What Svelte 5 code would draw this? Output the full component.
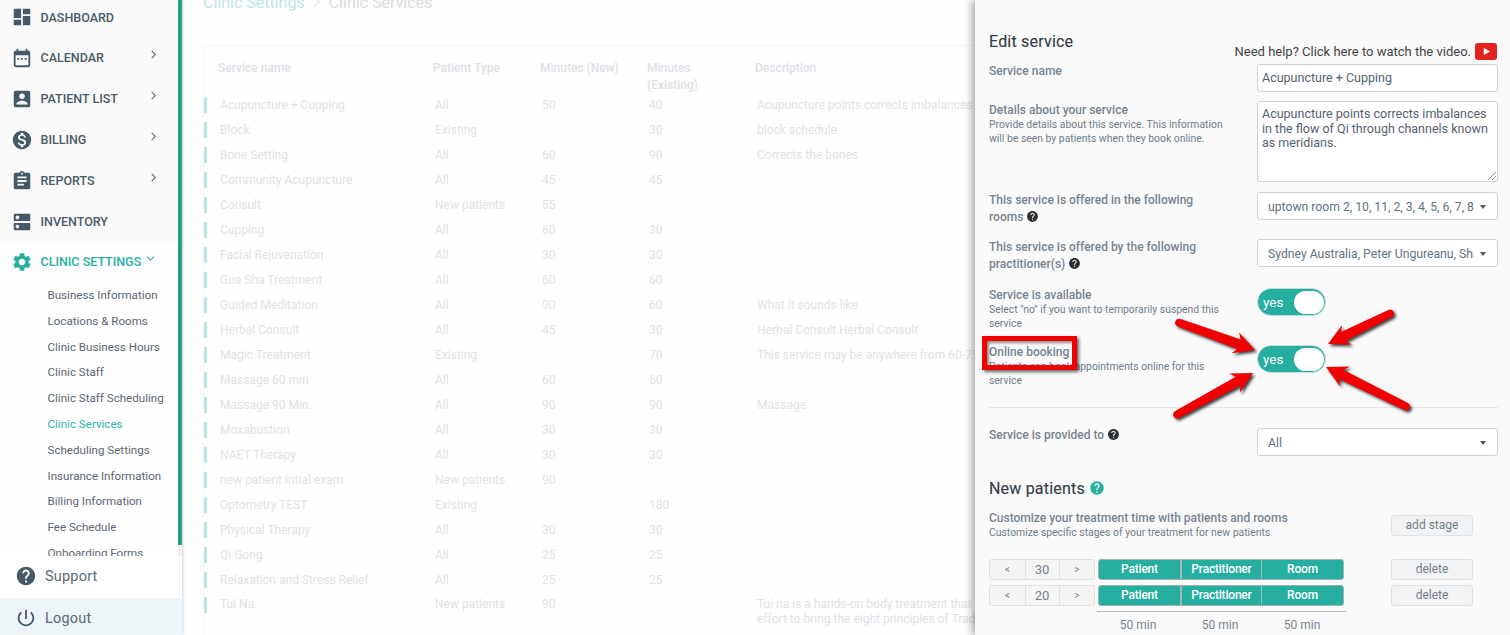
<script>
	const icons = {
		dashboard: 'M3 13h8V3H3v10zm0 8h8v-6H3v6zm10 0h8V11h-8v10zm0-18v6h8V3h-8z',
		calendar:
			'M19 4h-1V2h-2v2H8V2H6v2H5a2 2 0 0 0-2 2v14a2 2 0 0 0 2 2h14a2 2 0 0 0 2-2V6a2 2 0 0 0-2-2zm0 16H5V9h14v11zM9 12H7v2h2v-2zm4 0h-2v2h2v-2zm4 0h-2v2h2v-2z',
		patient:
			'M3 5v14a2 2 0 0 0 2 2h14a2 2 0 0 0 2-2V5a2 2 0 0 0-2-2H5a2 2 0 0 0-2 2zm12 4a3 3 0 1 1-6 0 3 3 0 0 1 6 0zM6 17c0-2 4-3.1 6-3.1s6 1.1 6 3.1v1H6v-1z',
		billing:
			'M12 2C6.48 2 2 6.48 2 12s4.48 10 10 10 10-4.48 10-10S17.52 2 12 2zm1.41 16.09V20h-2.67v-1.93c-1.71-.36-3.16-1.46-3.27-3.4h1.96c.1 1.05.82 1.87 2.65 1.87 1.96 0 2.4-.98 2.4-1.59 0-.83-.44-1.61-2.67-2.14-2.48-.6-4.18-1.62-4.18-3.67 0-1.72 1.39-2.84 3.11-3.21V4h2.67v1.95c1.86.45 2.79 1.86 2.85 3.39H14.3c-.05-1.11-.64-1.87-2.22-1.87-1.5 0-2.4.68-2.4 1.64 0 .84.65 1.39 2.67 1.91s4.18 1.39 4.18 3.91c-.01 1.83-1.38 2.83-3.12 3.16z',
		reports:
			'M19 3h-4.18C14.4 1.84 13.3 1 12 1c-1.3 0-2.4.84-2.82 2H5c-1.1 0-2 .9-2 2v14c0 1.1.9 2 2 2h14c1.1 0 2-.9 2-2V5c0-1.1-.9-2-2-2zm-7 0c.55 0 1 .45 1 1s-.45 1-1 1-1-.45-1-1 .45-1 1-1zm2 14H7v-2h7v2zm3-4H7v-2h10v2zm0-4H7V7h10v2z',
		inventory:
			'M20 13H4c-.55 0-1 .45-1 1v6c0 .55.45 1 1 1h16c.55 0 1-.45 1-1v-6c0-.55-.45-1-1-1zM7 19c-1.1 0-2-.9-2-2s.9-2 2-2 2 .9 2 2-.9 2-2 2zM20 3H4c-.55 0-1 .45-1 1v6c0 .55.45 1 1 1h16c.55 0 1-.45 1-1V4c0-.55-.45-1-1-1zM7 9c-1.1 0-2-.9-2-2s.9-2 2-2 2 .9 2 2-.9 2-2 2z',
		settings:
			'M19.14 12.94c.04-.3.06-.61.06-.94 0-.32-.02-.64-.07-.94l2.03-1.58c.18-.14.23-.41.12-.61l-1.92-3.32c-.12-.22-.37-.29-.59-.22l-2.39.96c-.5-.38-1.03-.7-1.62-.94l-.36-2.54c-.04-.24-.24-.41-.48-.41h-3.84c-.24 0-.43.17-.47.41l-.36 2.54c-.59.24-1.13.57-1.62.94l-2.39-.96c-.22-.08-.47 0-.59.22L2.74 8.87c-.12.21-.08.47.12.61l2.03 1.58c-.05.3-.09.63-.09.94s.02.64.07.94l-2.03 1.58c-.18.14-.23.41-.12.61l1.92 3.32c.12.22.37.29.59.22l2.39-.96c.5.38 1.03.7 1.62.94l.36 2.54c.05.24.24.41.48.41h3.84c.24 0 .44-.17.47-.41l.36-2.54c.59-.24 1.13-.56 1.62-.94l2.39.96c.22.08.47 0 .59-.22l1.92-3.32c.12-.22.07-.47-.12-.61l-2.01-1.58zM12 15.6c-1.98 0-3.6-1.62-3.6-3.6s1.62-3.6 3.6-3.6 3.6 1.62 3.6 3.6-1.62 3.6-3.6 3.6z',
		help: 'M12 2C6.48 2 2 6.48 2 12s4.48 10 10 10 10-4.48 10-10S17.52 2 12 2zm1 17h-2v-2h2v2zm2.07-7.75l-.9.92C13.45 12.9 13 13.5 13 15h-2v-.5c0-1.1.45-2.1 1.17-2.83l1.24-1.26c.37-.36.59-.86.59-1.41 0-1.1-.9-2-2-2s-2 .9-2 2H8c0-2.21 1.79-4 4-4s4 1.79 4 4c0 .88-.36 1.68-.93 2.25z',
		power:
			'M13 3h-2v10h2V3zm4.83 2.17l-1.42 1.42C17.99 7.86 19 9.81 19 12c0 3.87-3.13 7-7 7s-7-3.13-7-7c0-2.19 1.01-4.14 2.58-5.42L6.17 5.17C4.23 6.82 3 9.26 3 12c0 4.97 4.03 9 9 9s9-4.03 9-9c0-2.74-1.23-5.18-3.17-6.83z'
	};

	const navItems = [
		{ label: 'Dashboard', icon: 'dashboard' },
		{ label: 'Calendar', icon: 'calendar', more: true },
		{ label: 'Patient list', icon: 'patient', more: true },
		{ label: 'Billing', icon: 'billing', more: true },
		{ label: 'Reports', icon: 'reports', more: true },
		{ label: 'Inventory', icon: 'inventory' }
	];

	const subItems = [
		'Business Information',
		'Locations & Rooms',
		'Clinic Business Hours',
		'Clinic Staff',
		'Clinic Staff Scheduling',
		'Clinic Services',
		'Scheduling Settings',
		'Insurance Information',
		'Billing Information',
		'Fee Schedule',
		'Onboarding Forms'
	];

	const services = [
		['Acupuncture + Cupping', 'All', '50', '40', 'Acupuncture points corrects imbalances in the flow of Qi through channels known as meridians.'],
		['Block', 'Existing', '', '30', 'block schedule'],
		['Bone Setting', 'All', '60', '90', 'Corrects the bones'],
		['Community Acupuncture', 'All', '45', '45', ''],
		['Consult', 'New patients', '55', '', ''],
		['Cupping', 'All', '60', '30', ''],
		['Facial Rejuvenation', 'All', '30', '30', ''],
		['Gua Sha Treatment', 'All', '60', '60', ''],
		['Guided Meditation', 'All', '90', '60', 'What it sounds like'],
		['Herbal Consult', 'All', '45', '30', 'Herbal Consult Herbal Consult'],
		['Magic Treatment', 'Existing', '', '70', 'This service may be anywhere from 60-75 minutes long depending on the patient.'],
		['Massage 60 min', 'All', '60', '60', ''],
		['Massage 90 Min.', 'All', '90', '90', 'Massage'],
		['Moxabustion', 'All', '30', '30', ''],
		['NAET Therapy', 'All', '30', '30', ''],
		['new patient intial exam', 'New patients', '90', '', ''],
		['Optometry TEST', 'Existing', '', '180', ''],
		['Physical Therapy', 'All', '30', '30', ''],
		['Qi Gong', 'All', '25', '25', ''],
		['Relaxation and Stress Relief', 'All', '25', '25', '']
	];

	const stages = ['30', '20'];

	// tail and tip of each red annotation arrow, in page pixels
	const arrows = [
		[1180, 323, 1255, 350],
		[1389, 314, 1328, 344],
		[1178, 414, 1253, 373],
		[1405, 406, 1326, 367]
	];

	function arrowPath([x1, y1, x2, y2]) {
		const a = Math.atan2(y2 - y1, x2 - x1);
		const ux = Math.cos(a);
		const uy = Math.sin(a);
		const at = (along, side) =>
			`${(x2 - ux * along - uy * side).toFixed(1)} ${(y2 - uy * along + ux * side).toFixed(1)}`;
		const len = Math.hypot(x2 - x1, y2 - y1);
		return [
			`M${x2} ${y2}`,
			`L${at(21, 11)}`,
			`L${at(17, 5)}`,
			`L${at(len, 4)}`,
			`Q${at(len + 5, 4)} ${at(len + 5, 0)}`,
			`Q${at(len + 5, -4)} ${at(len, -4)}`,
			`L${at(17, -5)}`,
			`L${at(21, -11)}Z`
		].join('');
	}
</script>

{#snippet icon(name, cls = '')}
	<svg class="icon {cls}" viewBox="0 0 24 24" aria-hidden="true"><path d={icons[name]} /></svg>
{/snippet}

{#snippet hint()}
	<svg class="hint" viewBox="0 0 24 24" aria-hidden="true"><path d={icons.help} /></svg>
{/snippet}

<div class="page">
	<aside class="sidebar">
		<div class="rail">
			<nav class="nav">
				{#each navItems as item}
					<div class="nav-item">
						{@render icon(item.icon)}
						<span class="nav-label">{item.label}</span>
						{#if item.more}
							<svg class="chev" viewBox="0 0 10 10" aria-hidden="true"><path d="M3 1l4 4-4 4" /></svg>
						{/if}
					</div>
				{/each}
				<div class="nav-open">
					<div class="nav-item active">
						{@render icon('settings')}
						<span class="nav-label">Clinic settings</span>
						<svg class="chev down" viewBox="0 0 10 10" aria-hidden="true"><path d="M1 3l4 4 4-4" /></svg>
					</div>
					<ul class="sub">
						{#each subItems as sub}
							<li class:current={sub === 'Clinic Services'}>{sub}</li>
						{/each}
					</ul>
				</div>
			</nav>
			<div class="scroll-track"><div class="scroll-thumb"></div></div>
		</div>
		<div class="foot">
			{@render icon('help')}
			<span>Support</span>
		</div>
		<div class="foot logout">
			{@render icon('power')}
			<span>Logout</span>
		</div>
	</aside>

	<main class="main">
		<div class="crumbs">
			<span class="crumb-link">Clinic Settings</span>
			<svg class="crumb-sep" viewBox="0 0 10 14" aria-hidden="true"><path d="M2 2l5 5-5 5" /></svg>
			<span>Clinic Services</span>
		</div>
		<section class="table">
			<div class="row head">
				<span>Service name</span>
				<span>Patient Type</span>
				<span>Minutes (New)</span>
				<span>Minutes<br />(Existing)</span>
				<span>Description</span>
			</div>
			{#each services as s}
				<div class="row">
					<span class="name">{s[0]}</span>
					<span>{s[1]}</span>
					<span>{s[2]}</span>
					<span>{s[3]}</span>
					<span class="desc">{s[4]}</span>
				</div>
			{/each}
			<div class="row tall">
				<span class="name">Tui Na</span>
				<span>New patients</span>
				<span>90</span>
				<span></span>
				<span class="desc">Tui na is a hands-on body treatment that uses acupressure<br />effort to bring the eight principles of Traditional Chinese Medicine</span>
			</div>
		</section>
	</main>

	<section class="drawer">
		<header class="drawer-head">
			<h2>Edit service</h2>
			<div class="help-link">
				<span>Need help? Click here to watch the video.</span>
				<span class="yt"><svg viewBox="0 0 10 10" aria-hidden="true"><path d="M2 1l7 4-7 4z" /></svg></span>
			</div>
		</header>

		<div class="field f-name">
			<div class="lab">Service name</div>
			<div class="control">Acupuncture + Cupping</div>
		</div>

		<div class="field f-details">
			<div class="details-copy">
				<div class="lab">Details about your service</div>
				<p>Provide details about this service. This information will be seen by patients when they book online.</p>
			</div>
			<div class="control area">
				Acupuncture points corrects imbalances in the flow of Qi through channels known as meridians.
				<svg class="grip" viewBox="0 0 8 8" aria-hidden="true"><path d="M0 8l8-8M4 8l4-4" /></svg>
			</div>
		</div>

		<div class="field f-rooms">
			<div class="lab tall-lab">This service is offered in the following rooms {@render hint()}</div>
			<div class="control select"><span class="clip">uptown room 2, 10, 11, 2, 3, 4, 5, 6, 7, 8, 9</span><i class="caret"></i></div>
		</div>

		<div class="field f-staff">
			<div class="lab tall-lab">This service is offered by the following practitioner(s) {@render hint()}</div>
			<div class="control select"><span class="clip">Sydney Australia, Peter Ungureanu, Shannon</span><i class="caret"></i></div>
		</div>

		<div class="field f-avail">
			<div>
				<div class="lab">Service is available</div>
				<p>Select "no" if you want to temporarily suspend this service</p>
			</div>
			<div class="toggle"><span>yes</span><i></i></div>
		</div>

		<div class="field f-online">
			<div>
				<div class="lab">Online booking</div>
				<p>Patients can book appointments online for this service</p>
			</div>
			<div class="toggle"><span>yes</span><i></i></div>
		</div>

		<hr />

		<div class="field f-to">
			<div class="lab">Service is provided to {@render hint()}</div>
			<div class="control select"><span class="clip">All</span><i class="caret"></i></div>
		</div>

		<h2 class="h-new">New patients <svg class="hint teal" viewBox="0 0 24 24" aria-hidden="true"><path d={icons.help} /></svg></h2>

		<div class="stage-intro">
			<div>
				<div class="lab">Customize your treatment time with patients and rooms</div>
				<p class="wide">Customize specific stages of your treatment for new patients</p>
			</div>
			<div class="btn small">add stage</div>
		</div>

		<div class="stages">
			{#each stages as minutes}
				<div class="stage">
					<div class="stepper"><span>&lt;</span><b>{minutes}</b><span>&gt;</span></div>
					<div class="segments">
						<span>Patient</span><span>Practitioner</span><span>Room</span>
					</div>
					<div class="btn">delete</div>
				</div>
			{/each}
			<div class="totals"><span>50 min</span><span>50 min</span><span>50 min</span></div>
		</div>
	</section>

	<div class="mark"></div>
	<svg class="arrows" viewBox="0 0 1510 635" aria-hidden="true">
		{#each arrows as a}
			<path d={arrowPath(a)} />
		{/each}
	</svg>
</div>

<style>
	:global(body) {
		margin: 0;
		background: #fff;
		font-family: Roboto, 'Liberation Sans', sans-serif;
	}

	.page {
		position: relative;
		display: flex;
		width: 1510px;
		height: 635px;
		overflow: hidden;
	}

	.icon {
		width: 22px;
		height: 22px;
		flex: none;
		fill: #455a68;
	}

	/* sidebar */
	.sidebar {
		display: flex;
		flex-direction: column;
		flex: none;
		width: 182px;
		background: #fff;
		box-shadow: 1px 0 3px rgba(0, 0, 0, 0.18);
		z-index: 1;
	}

	.rail {
		display: flex;
		height: 556px;
		overflow: hidden;
	}

	.nav {
		flex: none;
		width: 178px;
		margin-top: -3px;
		background: #fafafa;
		overflow: hidden;
	}

	.scroll-track {
		flex: none;
		width: 4px;
		background: #f1f1f1;
	}

	.scroll-thumb {
		height: 545px;
		background: #21a090;
	}

	.nav-item {
		display: flex;
		align-items: center;
		height: 41px;
		padding-left: 11px;
		color: #4a5b69;
	}

	.nav-item:first-child {
		height: 40px;
	}

	.nav-label {
		margin-left: 7.5px;
		font-size: 12.5px;
		font-weight: 500;
		text-transform: uppercase;
	}

	.chev {
		position: relative;
		top: -3px;
		width: 9px;
		height: 9px;
		margin-left: auto;
		margin-right: 20px;
		fill: none;
		stroke: #5f6f7c;
		stroke-width: 1.2;
	}

	.nav-open {
		background: #fefefe;
	}

	.nav-item.active {
		height: 39px;
		color: #26b0a0;
	}

	.nav-item.active .icon {
		fill: #26b0a0;
	}

	.nav-item.active .chev {
		stroke: #26b0a0;
		margin-right: 21px;
		margin-left: 5px;
	}

	.sub {
		margin: 2px 0 0;
		padding: 0 0 0 47.5px;
		list-style: none;
	}

	.sub li {
		height: 25.8px;
		font-size: 11.6px;
		line-height: 25.8px;
		white-space: nowrap;
		color: #5b6873;
	}

	.sub li.current {
		color: #2db5a5;
	}

	.foot {
		display: flex;
		align-items: center;
		gap: 8px;
		box-sizing: border-box;
		height: 42px;
		padding: 0 0 2px 15px;
		font-size: 14.5px;
		letter-spacing: 0.2px;
		color: #5b6873;
		background: #fff;
	}

	.foot.logout {
		height: 37px;
		padding: 3px 0 0 15px;
		background: #edf5f8;
	}

	/* faded page behind the drawer */
	.main {
		flex: 1;
		min-width: 0;
		padding-left: 21px;
		overflow: hidden;
		background: #fefefe;
		font-size: 12px;
		color: #e0e3e6;
	}

	.crumbs {
		display: flex;
		align-items: center;
		gap: 7px;
		height: 20px;
		margin-top: -8px;
		font-size: 16px;
		color: #d8dadd;
	}

	.crumb-link {
		color: #bce8e3;
	}

	.crumb-sep {
		width: 10px;
		height: 14px;
		fill: none;
		stroke: #e4e6e8;
		stroke-width: 1.2;
	}

	.table {
		width: 1290px;
		margin-top: 33px;
		border: 1px solid #f4f5f6;
		padding-bottom: 40px;
	}

	.row {
		position: relative;
		display: grid;
		grid-template-columns: 215px 107px 107px 108px 1fr;
		align-items: center;
		height: 25px;
		padding-left: 16px;
		line-height: 15px;
		white-space: nowrap;
	}

	.row::before {
		content: '';
		position: absolute;
		left: 0;
		top: 4px;
		width: 3px;
		height: 16px;
		background: #b9e6e2;
	}

	.row.head {
		align-items: start;
		height: 33px;
		padding-top: 14px;
		padding-left: 14px;
		font-weight: 500;
		line-height: 17px;
		color: #dfe2e6;
		box-sizing: content-box;
	}

	.row.head::before {
		display: none;
	}

	.row.tall {
		align-items: start;
		height: 40px;
		padding-top: 4px;
	}

	/* drawer */
	.drawer {
		position: absolute;
		top: 0;
		bottom: 0;
		left: 975px;
		width: 535px;
		box-sizing: border-box;
		padding-left: 14px;
		overflow: hidden;
		background: #fafafa;
		box-shadow: -3px 0 8px rgba(0, 0, 0, 0.35);
		z-index: 2;
		font-size: 12px;
		color: #6f7d8a;
	}

	h2 {
		margin: 0;
		font-size: 16px;
		font-weight: 400;
		letter-spacing: 0.2px;
		line-height: 20px;
		color: #333d47;
		-webkit-text-stroke: 0.15px #333d47;
	}

	.drawer-head {
		display: flex;
		justify-content: space-between;
		align-items: flex-start;
		width: 508px;
		height: 64px;
		padding-top: 32px;
		box-sizing: border-box;
	}

	.help-link {
		display: flex;
		align-items: center;
		gap: 4px;
		margin-top: 11px;
		font-size: 13px;
		color: #444;
	}

	.yt {
		display: flex;
		align-items: center;
		justify-content: center;
		width: 22px;
		height: 17px;
		border-radius: 3px;
		background: #e2241f;
	}

	.yt svg {
		width: 9px;
		height: 9px;
		fill: #fff;
	}

	.field {
		display: grid;
		grid-template-columns: 268px 241px;
	}

	.lab {
		font-size: 12px;
		font-weight: 500;
		line-height: 14px;
		color: #77848f;
	}

	.tall-lab {
		line-height: 17px;
		width: 230px;
	}

	p {
		margin: 1px 0 0;
		font-size: 10.4px;
		line-height: 14px;
		width: 240px;
		color: #6f7d8a;
	}

	p.wide {
		width: auto;
		white-space: nowrap;
	}

	.control {
		box-sizing: border-box;
		height: 28px;
		padding: 0 4px;
		border: 1px solid #d2d2d2;
		border-radius: 3px;
		background: #fff;
		font-size: 12.5px;
		line-height: 26px;
		color: #55626e;
	}

	.f-details {
		margin-top: 9px;
	}

	.details-copy {
		padding-top: 2px;
	}

	.control.area {
		position: relative;
		height: 81px;
		padding-top: 5px;
		line-height: 14.5px;
	}

	.grip {
		position: absolute;
		right: 1px;
		bottom: 1px;
		width: 8px;
		height: 8px;
		fill: none;
		stroke: #777;
		stroke-width: 0.8;
	}

	.f-rooms {
		margin-top: 10px;
	}

	.f-staff {
		margin-top: 13px;
	}

	.select {
		display: flex;
		align-items: center;
		padding: 1px 11px 0 10px;
		font-size: 12.2px;
		color: #5f7382;
	}

	.clip {
		flex: 1;
		min-width: 0;
		overflow: hidden;
		white-space: nowrap;
	}

	.caret {
		flex: none;
		width: 0;
		height: 0;
		margin-left: 6px;
		border: 3.5px solid transparent;
		border-top: 4px solid #555;
		border-bottom: 0;
	}

	.hint {
		width: 13px;
		height: 13px;
		vertical-align: -2px;
		fill: #2c2f33;
	}

	.hint.teal {
		width: 16px;
		height: 16px;
		vertical-align: -2px;
		fill: #26b0a0;
	}

	.f-avail {
		margin-top: 15px;
	}

	.f-online {
		margin-top: 14px;
	}

	.toggle {
		display: flex;
		align-items: center;
		justify-content: space-between;
		box-sizing: border-box;
		width: 69px;
		height: 28px;
		padding: 0 1.5px 0 5px;
		border: 1px solid #c4ddda;
		border-radius: 14px;
		background: #26aea0;
		font-size: 13.5px;
		color: #fff;
	}

	.toggle span {
		margin-top: -1px;
	}

	.toggle i {
		width: 30px;
		height: 23px;
		border-radius: 12px;
		background: #fff;
	}

	hr {
		width: 509px;
		height: 1px;
		margin: 19px 0 20px;
		border: 0;
		background: #e6e6e6;
	}

	.h-new {
		margin-top: 23px;
	}

	.stage-intro {
		display: grid;
		grid-template-columns: 402px 82px;
		align-items: start;
		margin-top: 12px;
	}

	.btn {
		box-sizing: border-box;
		height: 21px;
		border: 1px solid #dfe1e3;
		border-radius: 3px;
		background: #f2f3f4;
		font-size: 12px;
		line-height: 19px;
		text-align: center;
		color: #727f8b;
	}

	.btn.small {
		margin-top: 4px;
	}

	.stages {
		margin-top: 19px;
	}

	.stage {
		display: grid;
		grid-template-columns: 106px 249px 47px 82px;
		align-items: stretch;
		height: 21px;
		margin-bottom: 5px;
	}

	.stage .btn {
		grid-column: 4;
	}

	.stepper {
		display: grid;
		grid-template-columns: 1fr 35px 1fr;
		box-sizing: border-box;
		border: 1px solid #dfe1e3;
		border-radius: 3px;
		background: #f5f5f5;
		font-size: 10px;
		line-height: 19px;
		text-align: center;
		color: #77848f;
	}

	.stepper b {
		border: solid #dfe1e3;
		border-width: 0 1px;
		font-size: 13px;
		font-weight: 400;
	}

	.segments {
		display: grid;
		grid-template-columns: 81px 81px 82px;
		box-sizing: border-box;
		width: 246px;
		margin-left: 3px;
		border: 1px solid #9fb0ad;
		border-radius: 3px;
		background: #26aea0;
		overflow: hidden;
		font-size: 12px;
		font-weight: 500;
		letter-spacing: -0.2px;
		line-height: 19px;
		text-align: center;
		color: #fff;
	}

	.segments span + span {
		border-left: 1px solid #a8b5b3;
	}

	.segments span:nth-child(2) {
		border-left-width: 2px;
	}

	.totals {
		display: grid;
		grid-template-columns: 82px 82px 82px;
		width: 249px;
		margin: 0 0 0 108px;
		border-top: 1px solid #b9b9b9;
		padding-top: 6px;
		font-size: 12px;
		text-align: center;
		color: #77848f;
	}

	/* red annotations over the form */
	.mark {
		position: absolute;
		left: 982px;
		top: 336px;
		box-sizing: border-box;
		width: 95px;
		height: 34px;
		border: 5px solid #f00000;
		box-shadow: 2px 2px 3px rgba(0, 0, 0, 0.6), inset 2px 2px 3px rgba(0, 0, 0, 0.45);
		z-index: 3;
	}

	.arrows {
		position: absolute;
		inset: 0;
		width: 1510px;
		height: 635px;
		z-index: 3;
		pointer-events: none;
		filter: drop-shadow(2px 2px 1.5px rgba(0, 0, 0, 0.75));
	}

	.arrows path {
		fill: #f00000;
	}
</style>
